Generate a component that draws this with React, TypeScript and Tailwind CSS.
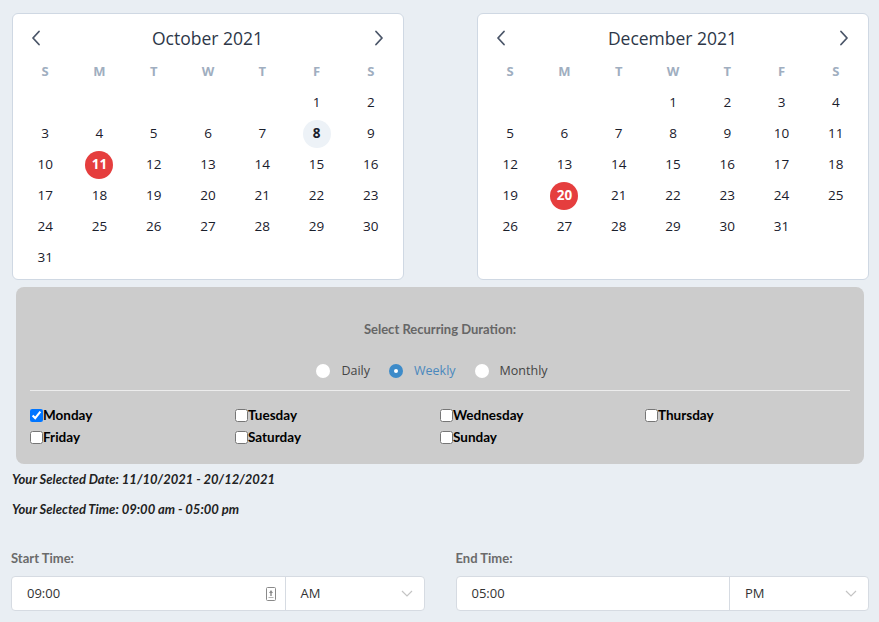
import React from 'react'

const WEEKDAYS = ['S', 'M', 'T', 'W', 'T', 'F', 'S']

interface MonthProps {
  title: string
  startDay: number
  days: number
  selected: number
  highlighted?: number
}

function Chevron({ dir }: { dir: 'left' | 'right' }) {
  return (
    <svg width="10" height="16" viewBox="0 0 10 16" fill="none">
      <path
        d={dir === 'left' ? 'M8 1.5 L2 8 L8 14.5' : 'M2 1.5 L8 8 L2 14.5'}
        stroke="#4a5568"
        strokeWidth="1.8"
        strokeLinecap="round"
        strokeLinejoin="round"
      />
    </svg>
  )
}

function MonthCalendar({ title, startDay, days, selected, highlighted }: MonthProps) {
  const cells: (number | null)[] = []
  for (let i = 0; i < startDay; i++) cells.push(null)
  for (let d = 1; d <= days; d++) cells.push(d)
  while (cells.length < 42) cells.push(null)

  return (
    <div className="w-[392px] h-[267px] bg-white border border-[#cfd8e3] rounded-[6px] pt-[8px] px-[5px] font-['Open_Sans',sans-serif]">
      <div className="h-[32px] flex items-center justify-between pl-[13px] pr-[14px]">
        <Chevron dir="left" />
        <span className="text-[17.5px] font-medium text-[#2d3748]">{title}</span>
        <Chevron dir="right" />
      </div>
      <div className="grid grid-cols-7 mt-[2px]">
        {WEEKDAYS.map((w, i) => (
          <div key={i} className="h-[31px] flex items-center justify-center text-[13px] font-bold text-[#a0aec0]">
            {w}
          </div>
        ))}
        {cells.map((d, i) => (
          <div key={i} className="h-[31px] flex items-center justify-center">
            {d !== null && (
              <span
                className={
                  d === selected
                    ? 'w-[28px] h-[28px] rounded-full bg-[#e53e3e] text-white font-bold text-[13.5px] flex items-center justify-center'
                    : d === highlighted
                    ? 'w-[28px] h-[28px] rounded-full bg-[#edf2f7] text-[#1a202c] font-bold text-[13.5px] flex items-center justify-center'
                    : 'text-[13.5px] text-[#1a202c]'
                }
              >
                {d}
              </span>
            )}
          </div>
        ))}
      </div>
    </div>
  )
}

function Radio({ label, checked }: { label: string; checked?: boolean }) {
  return (
    <label className="flex items-center gap-[11px]">
      {checked ? (
        <span className="w-[14px] h-[14px] rounded-full bg-[#3d8bc9] flex items-center justify-center">
          <span className="w-[4px] h-[4px] rounded-full bg-white" />
        </span>
      ) : (
        <span className="w-[14px] h-[14px] rounded-full bg-white" />
      )}
      <span className={`text-[12.5px] ${checked ? 'text-[#4a88bd]' : 'text-[#444444]'}`}>{label}</span>
    </label>
  )
}

function DayCheck({ label, checked }: { label: string; checked?: boolean }) {
  return (
    <label className="flex items-center h-[22px]">
      <input type="checkbox" defaultChecked={checked} className="m-0 w-[13px] h-[13px]" />
      <span className="text-[13.5px] font-bold text-black font-['Lato',sans-serif]">{label}</span>
    </label>
  )
}

function TimeIcon() {
  return (
    <svg width="10" height="14" viewBox="0 0 10 14" fill="none">
      <rect x="0.5" y="0.5" width="9" height="13" rx="1" stroke="#8a8a8a" />
      <path d="M5 3 L3 6 H7 Z" fill="#8a8a8a" />
      <rect x="4.3" y="6" width="1.4" height="3" fill="#8a8a8a" />
      <rect x="2.5" y="10" width="5" height="1" fill="#b5b5b5" />
    </svg>
  )
}

function TimeField({ label, value, period, icon }: { label: string; value: string; period: string; icon?: boolean }) {
  return (
    <div>
      <div className="h-[18px] flex items-center text-[13px] font-bold text-[#6b6b6b] font-['Lato',sans-serif]">{label}</div>
      <div className="mt-[8px] h-[35px] flex bg-white border border-[#d6dbe2] rounded-[4px] font-['Open_Sans',sans-serif] text-[13px] text-[#333333]">
        <div className="flex-1 flex items-center justify-between pl-[15px] pr-[9px] border-r border-[#d6dbe2]">
          <span>{value}</span>
          {icon && <TimeIcon />}
        </div>
        <div className="w-[138px] flex items-center justify-between pl-[15px] pr-[11px]">
          <span>{period}</span>
          <svg width="12" height="7" viewBox="0 0 12 7" fill="none">
            <path d="M1 1 L6 6 L11 1" stroke="#c4c4c4" strokeWidth="1.2" />
          </svg>
        </div>
      </div>
    </div>
  )
}

export default function App() {
  return (
    <div className="min-h-screen w-full bg-[#e9eef3] pt-[13px] pb-[12px]">
      {/* Calendars */}
      <div className="flex gap-[73px] pl-[12px]">
        <MonthCalendar title="October 2021" startDay={5} days={31} selected={11} highlighted={8} />
        <MonthCalendar title="December 2021" startDay={3} days={31} selected={20} />
      </div>

      {/* Recurring duration */}
      <div className="mt-[7px] ml-[16px] mr-[15px] bg-[#cccccc] rounded-[8px] pt-[34px] pb-[16px] px-[14px]">
        <div className="h-[18px] flex items-center justify-center text-[13px] font-bold text-[#666666] font-['Lato',sans-serif]">
          Select Recurring Duration:
        </div>
        <div className="mt-[22px] h-[20px] flex items-center justify-center gap-[19px] pr-[16px] font-['Open_Sans',sans-serif]">
          <Radio label="Daily" />
          <Radio label="Weekly" checked />
          <Radio label="Monthly" />
        </div>
        <div className="mt-[9px] h-px bg-[#ececec]" />
        <div className="mt-[13px] grid grid-cols-4">
          <DayCheck label="Monday" checked />
          <DayCheck label="Tuesday" />
          <DayCheck label="Wednesday" />
          <DayCheck label="Thursday" />
          <DayCheck label="Friday" />
          <DayCheck label="Saturday" />
          <DayCheck label="Sunday" />
        </div>
      </div>

      {/* Summary */}
      <div className="pl-[12px] font-['Lato',sans-serif] italic font-bold text-[13px] text-[#222222]">
        <div className="mt-[6px] h-[20px] flex items-center">Your Selected Date: 11/10/2021 - 20/12/2021</div>
        <div className="mt-[10px] h-[20px] flex items-center">Your Selected Time: 09:00 am - 05:00 pm</div>
      </div>

      {/* Time pickers */}
      <div className="mt-[30px] grid grid-cols-2 gap-[31px] pl-[11px] pr-[10px]">
        <TimeField label="Start Time:" value="09:00" period="AM" icon />
        <TimeField label="End Time:" value="05:00" period="PM" />
      </div>
    </div>
  )
}
